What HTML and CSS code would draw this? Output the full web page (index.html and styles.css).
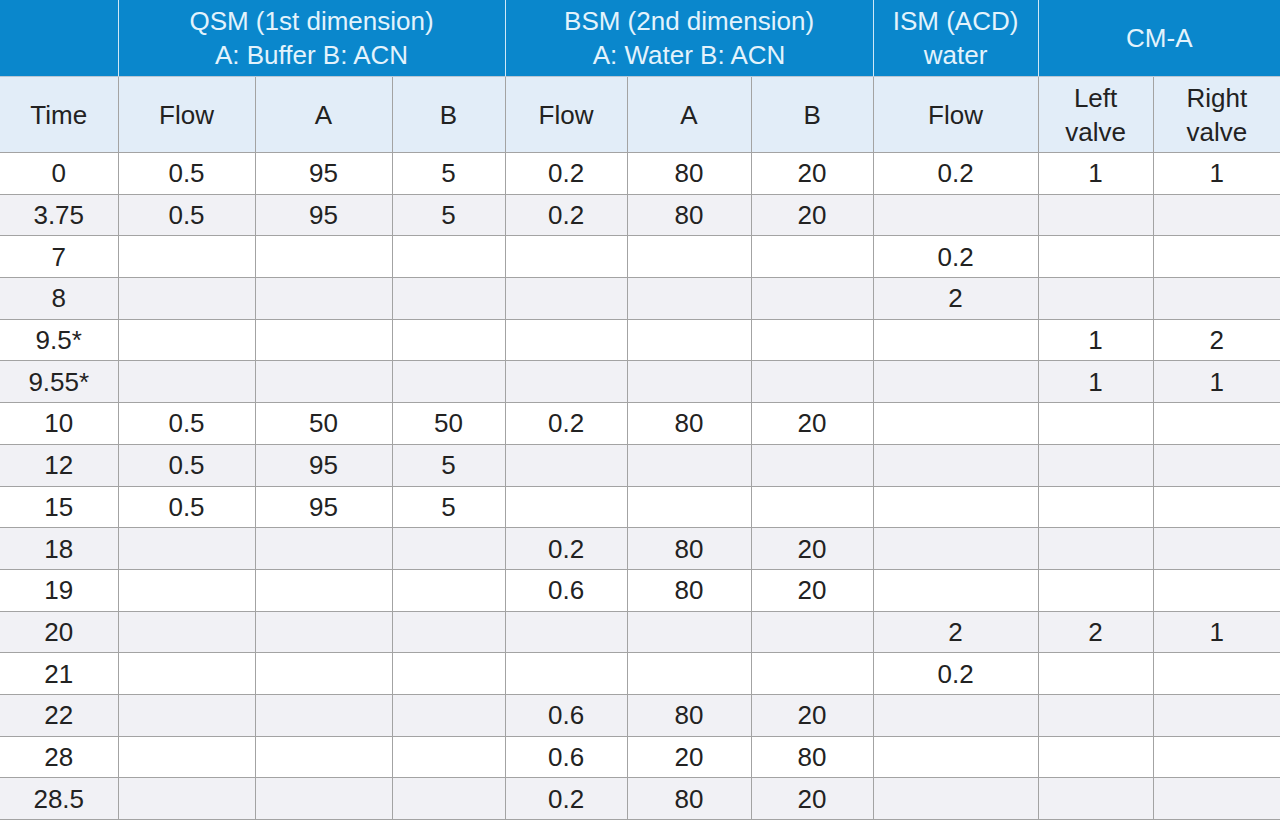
FILE: index.html
```html
<!DOCTYPE html>
<html>
<head>
<meta charset="utf-8">
<link rel="stylesheet" href="styles.css">
</head>
<body>
<table class="grid">
  <colgroup>
    <col class="c-time"><col class="c-q1"><col class="c-q2"><col class="c-q3">
    <col class="c-b1"><col class="c-b2"><col class="c-b3">
    <col class="c-i1"><col class="c-m1"><col class="c-m2">
  </colgroup>
  <thead>
    <tr class="top">
      <th></th>
      <th colspan="3">QSM (1st dimension)<br>A: Buffer B: ACN</th>
      <th colspan="3">BSM (2nd dimension)<br>A: Water B: ACN</th>
      <th>ISM (ACD)<br>water</th>
      <th colspan="2">CM-A</th>
    </tr>
    <tr class="sub">
      <th>Time</th><th>Flow</th><th>A</th><th>B</th>
      <th>Flow</th><th>A</th><th>B</th>
      <th>Flow</th><th>Left<br>valve</th><th>Right<br>valve</th>
    </tr>
  </thead>
  <tbody>
    <tr><td>0</td><td>0.5</td><td>95</td><td>5</td><td>0.2</td><td>80</td><td>20</td><td>0.2</td><td>1</td><td>1</td></tr>
    <tr><td>3.75</td><td>0.5</td><td>95</td><td>5</td><td>0.2</td><td>80</td><td>20</td><td></td><td></td><td></td></tr>
    <tr><td>7</td><td></td><td></td><td></td><td></td><td></td><td></td><td>0.2</td><td></td><td></td></tr>
    <tr><td>8</td><td></td><td></td><td></td><td></td><td></td><td></td><td>2</td><td></td><td></td></tr>
    <tr><td>9.5*</td><td></td><td></td><td></td><td></td><td></td><td></td><td></td><td>1</td><td>2</td></tr>
    <tr><td>9.55*</td><td></td><td></td><td></td><td></td><td></td><td></td><td></td><td>1</td><td>1</td></tr>
    <tr><td>10</td><td>0.5</td><td>50</td><td>50</td><td>0.2</td><td>80</td><td>20</td><td></td><td></td><td></td></tr>
    <tr><td>12</td><td>0.5</td><td>95</td><td>5</td><td></td><td></td><td></td><td></td><td></td><td></td></tr>
    <tr><td>15</td><td>0.5</td><td>95</td><td>5</td><td></td><td></td><td></td><td></td><td></td><td></td></tr>
    <tr><td>18</td><td></td><td></td><td></td><td>0.2</td><td>80</td><td>20</td><td></td><td></td><td></td></tr>
    <tr><td>19</td><td></td><td></td><td></td><td>0.6</td><td>80</td><td>20</td><td></td><td></td><td></td></tr>
    <tr><td>20</td><td></td><td></td><td></td><td></td><td></td><td></td><td>2</td><td>2</td><td>1</td></tr>
    <tr><td>21</td><td></td><td></td><td></td><td></td><td></td><td></td><td>0.2</td><td></td><td></td></tr>
    <tr><td>22</td><td></td><td></td><td></td><td>0.6</td><td>80</td><td>20</td><td></td><td></td><td></td></tr>
    <tr><td>28</td><td></td><td></td><td></td><td>0.6</td><td>20</td><td>80</td><td></td><td></td><td></td></tr>
    <tr><td>28.5</td><td></td><td></td><td></td><td>0.2</td><td>80</td><td>20</td><td></td><td></td><td></td></tr>
  </tbody>
</table>
</body>
</html>
```
FILE: styles.css
```css
html, body {
  margin: 0;
  padding: 0;
  background: #ffffff;
}

body {
  font-family: "Liberation Sans", Arial, sans-serif;
}

.grid {
  width: 1280px;
  table-layout: fixed;
  border-collapse: collapse;
  font-size: 26px;
  color: #222222;
}

.c-time { width: 118px; }
.c-q1 { width: 137px; }
.c-q2 { width: 137px; }
.c-q3 { width: 113px; }
.c-b1 { width: 122px; }
.c-b2 { width: 124px; }
.c-b3 { width: 122px; }
.c-i1 { width: 165px; }
.c-m1 { width: 115px; }
.c-m2 { width: 127px; }

.grid th,
.grid td {
  padding: 0;
  text-align: center;
  vertical-align: middle;
  font-weight: normal;
  line-height: 34px;
}

.top th {
  height: 76px;
  background: #0a87cc;
  color: #e3f3fc;
  border-left: 1px solid #cfe8f7;
  border-right: 1px solid #cfe8f7;
  border-bottom: 1px solid #b9c7d4;
}

.top th:first-child { border-left: none; }
.top th:last-child { border-right: none; }

.sub th {
  height: 75px;
  background: #e2edf8;
  color: #222222;
  border: 1px solid #a3a3a3;
  border-top: none;
}

.grid td {
  height: 40.7px;
  border: 1px solid #a3a3a3;
}

.sub th:first-child,
.grid td:first-child { border-left: none; }
.sub th:last-child,
.grid td:last-child { border-right: none; }

tbody tr:nth-child(odd) td { background: #ffffff; }
tbody tr:nth-child(even) td { background: #f1f1f5; }
```
